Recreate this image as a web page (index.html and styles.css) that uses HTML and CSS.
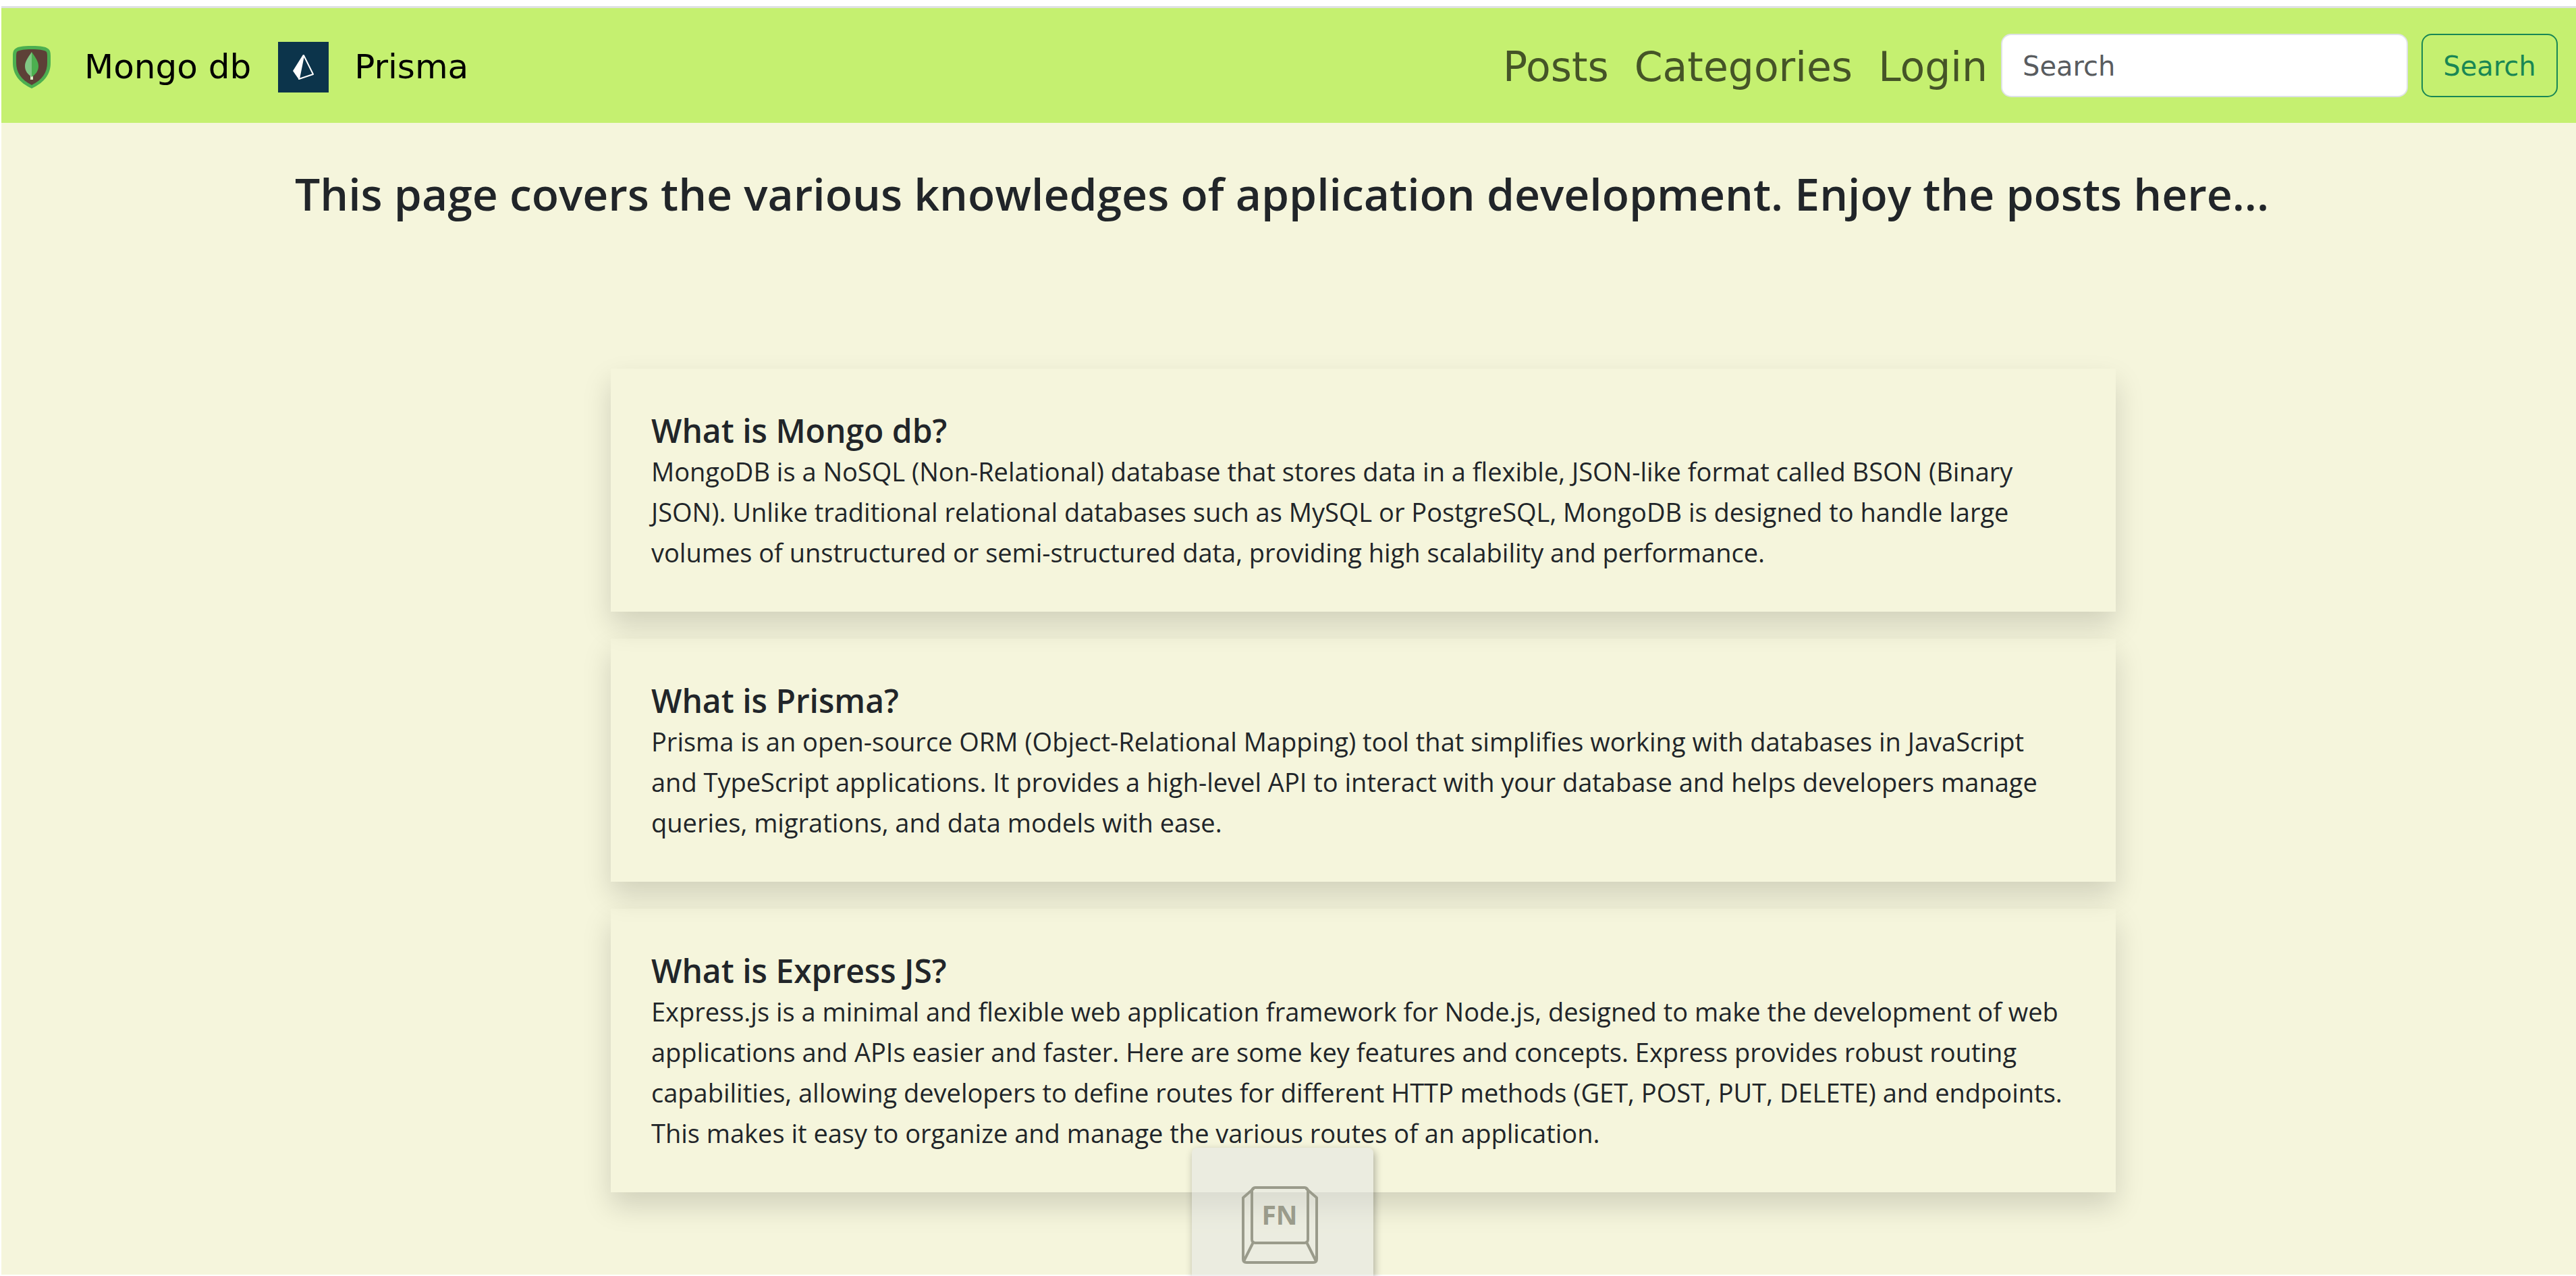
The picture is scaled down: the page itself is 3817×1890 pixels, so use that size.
FILE: index.html
```html
<!DOCTYPE html>
<html lang="en">
<head>
<meta charset="utf-8">
<title>Application development posts</title>
<link rel="stylesheet" href="styles.css">
</head>
<body>
<div class="page">
  <header class="navbar">
    <a class="brand" href="#mongo">
      <svg class="shield" viewBox="0 0 56 63" aria-hidden="true">
        <path d="M28 0C14 0 8 1 4 4C1 6 0 9 0 15V25C0 42 9 54 28 63C47 54 56 42 56 25V15C56 9 55 6 52 4C48 1 42 0 28 0Z" fill="#4caf50"/>
        <path d="M28 5C17 5 11 6 7 8Q5 9 5 15V25C5 39 12 50 28 58C44 50 51 39 51 25V15Q51 9 49 8C45 6 39 5 28 5Z" fill="#5d4037"/>
        <path d="M26 43H30V50H26Z" fill="#dcedc8"/>
        <path d="M28 9C22 18 18 23 18 30C18 37 22 42 28 46Z" fill="#81c784"/>
        <path d="M28 9C34 18 38 23 38 30C38 37 34 42 28 46Z" fill="#4caf50"/>
      </svg>
      <span>Mongo db</span>
    </a>
    <a class="brand" href="#prisma">
      <svg class="prism" viewBox="0 0 75 75" aria-hidden="true">
        <rect width="75" height="75" fill="#0c344b"/>
        <path d="M38 20L52 48L31 55Z" fill="none" stroke="#fff" stroke-width="2" stroke-linejoin="round"/>
        <path d="M37 19L22 43L31 56L38 20Z" fill="#fff"/>
      </svg>
      <span>Prisma</span>
    </a>
    <nav class="links" aria-label="Main">
      <a href="#posts">Posts</a>
      <a href="#categories">Categories</a>
      <a href="#login">Login</a>
    </nav>
    <form class="search" role="search">
      <input type="search" placeholder="Search" aria-label="Search">
      <button type="button">Search</button>
    </form>
  </header>
  <main>
    <h1>This page covers the various knowledges of application development. Enjoy the posts here...</h1>
    <div class="cards" id="posts">
      <article class="card" id="mongo">
        <h2>What is Mongo db?</h2>
        <p>MongoDB is a NoSQL (Non-Relational) database that stores data in a flexible, JSON-like format called BSON (Binary JSON). Unlike traditional relational databases such as MySQL or PostgreSQL, MongoDB is designed to handle large volumes of unstructured or semi-structured data, providing high scalability and performance.</p>
      </article>
      <article class="card" id="prisma">
        <h2>What is Prisma?</h2>
        <p>Prisma is an open-source ORM (Object-Relational Mapping) tool that simplifies working with databases in JavaScript and TypeScript applications. It provides a high-level API to interact with your database and helps developers manage queries, migrations, and data models with ease.</p>
      </article>
      <article class="card" id="express">
        <h2>What is Express JS?</h2>
        <p>Express.js is a minimal and flexible web application framework for Node.js, designed to make the development of web applications and APIs easier and faster. Here are some key features and concepts. Express provides robust routing capabilities, allowing developers to define routes for different HTTP methods (GET, POST, PUT, DELETE) and endpoints. This makes it easy to organize and manage the various routes of an application.</p>
      </article>
    </div>
  </main>
</div>
<div class="key-overlay">
  <svg viewBox="0 0 116 118" role="img" aria-label="FN key">
    <g fill="none" stroke="#9a9b8b" stroke-width="4" stroke-linejoin="round" stroke-linecap="round">
      <rect x="16" y="3" width="83" height="82" rx="5"/>
      <path d="M18 5L3 18V109Q3 114 8 114H107Q112 114 112 109V18L97 5M18 84L4 112M97 84L111 112"/>
    </g>
    <text x="57" y="58" text-anchor="middle">FN</text>
  </svg>
</div>
</body>
</html>
```
FILE: styles.css
```css
* { box-sizing: border-box; }

body {
  margin: 0;
  padding: 9px 0 2px 2px;
  min-height: 100vh;
  display: flex;
  flex-direction: column;
  position: relative;
  overflow: hidden;
  background: #fff;
  color: #212529;
  font-family: "Open Sans", "Noto Sans", sans-serif;
  font-size: 38px;
  line-height: 60px;
}

.page {
  flex: 1;
  border-top: 3px solid #dfe1e3;
  background: #f5f5dc;
}

.navbar {
  display: flex;
  align-items: center;
  min-height: 170px;
  padding: 0 27px 0 17px;
  background: #c5f070;
  font-family: "DejaVu Sans", sans-serif;
}

.brand {
  display: flex;
  align-items: center;
  margin-top: 4px;
  margin-right: 40px;
  color: #000;
  font-size: 50px;
  text-decoration: none;
}
.brand span { line-height: 76px; }

.shield { width: 56px; height: 63px; margin-right: 50px; }
.prism { width: 75px; height: 75px; margin-right: 38px; }

.links {
  display: flex;
  gap: 38px;
  margin-top: 4px;
  margin-left: auto;
  margin-right: 20px;
}
.links a {
  color: #455427;
  font-size: 60px;
  line-height: 90px;
  text-decoration: none;
}

.search { display: flex; gap: 20px; margin-bottom: 0; }
.search input,
.search button {
  height: 94px;
  border: 2px solid #dee2e6;
  border-radius: 15px;
  font-family: inherit;
  font-size: 40px;
}
.search input { width: 603px; padding: 2px 30px 0; background: #fff; }
.search input::placeholder { color: #595c5f; opacity: 1; }
.search button {
  width: 202px;
  padding: 2px 0 0;
  border-color: #198754;
  background: transparent;
  color: #198754;
}

h1 {
  margin: 62px 0 0;
  padding-right: 20px;
  font-size: 66px;
  line-height: 84px;
  font-weight: 600;
  text-align: center;
}

.cards {
  display: flex;
  flex-direction: column;
  gap: 40px;
  width: 58.45%;
  margin: 218px 0 0 23.67%;
}

.card {
  padding: 62px 60px 58px;
  box-shadow: 0 20px 40px rgba(0, 0, 0, 0.15);
}
.card h2 { margin: 0; font-size: 48px; line-height: 60px; font-weight: 600; }
.card p { margin: 0; }

/* On-screen keyboard indicator, partly below the window edge */
.key-overlay {
  position: absolute;
  left: 46.27%;
  bottom: 0;
  width: 269px;
  height: 190px;
  padding: 56px 0 0 73px;
  border-radius: 8px 8px 0 0;
  background: rgba(225, 227, 227, 0.5);
  box-shadow: 2px 4px 12px rgba(0, 0, 0, 0.3);
}
.key-overlay svg { display: block; width: 116px; height: 118px; }
.key-overlay text { fill: #9a9b8b; font: 700 39px "Open Sans", sans-serif; }
```
